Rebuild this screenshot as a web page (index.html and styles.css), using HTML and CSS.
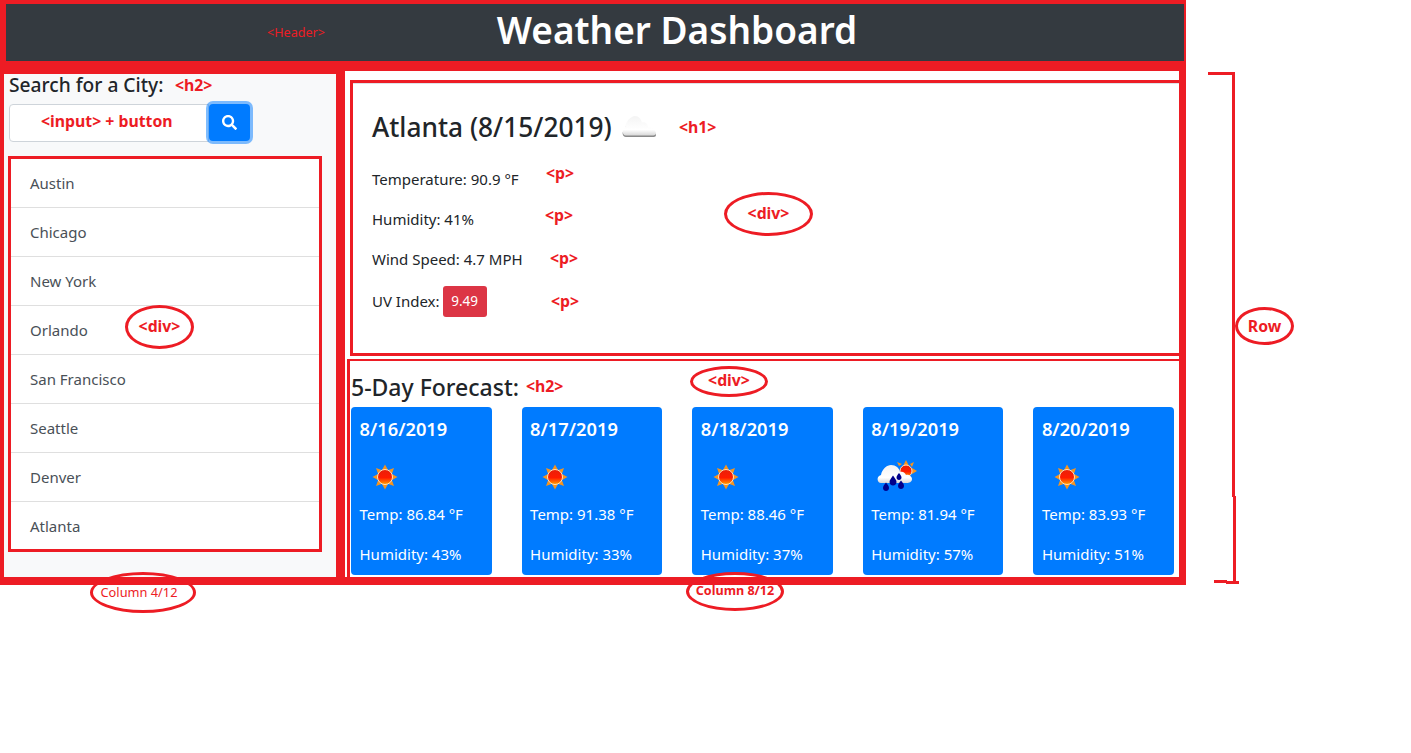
FILE: index.html
```html
<!DOCTYPE html>
<html lang="en">
<head>
    <meta charset="UTF-8">
    <title>Weather Dashboard</title>
    <link rel="stylesheet" href="styles.css">
</head>
<body>
    <svg class="defs" width="0" height="0">
        <defs>
            <linearGradient id="sunFill" x1="0" y1="0" x2="0" y2="1">
                <stop offset="0" stop-color="#e8200a"/>
                <stop offset="0.55" stop-color="#ff1c00"/>
                <stop offset="1" stop-color="#ffa200"/>
            </linearGradient>
            <linearGradient id="cloudFill" x1="0" y1="0" x2="0" y2="1">
                <stop offset="0" stop-color="#f4f4f4"/>
                <stop offset="0.7" stop-color="#ffffff"/>
                <stop offset="1" stop-color="#d8d8d8"/>
            </linearGradient>
            <symbol id="sun" viewBox="0 0 50 50">
                <g fill="#f7941d">
                    <polygon points="21.500,19 25,12.500 28.500,19"/>
                    <polygon points="21.500,31 25,37.500 28.500,31"/>
                    <polygon points="19,21.500 12.500,25 19,28.500"/>
                    <polygon points="31,21.500 37.500,25 31,28.500"/>
                    <polygon points="18,21.500 16,16 21.500,18"/>
                    <polygon points="32,21.500 34,16 28.500,18"/>
                    <polygon points="18,28.500 16,34 21.500,32"/>
                    <polygon points="32,28.500 34,34 28.500,32"/>
                </g>
                <circle cx="25" cy="25" r="7.500" fill="url(#sunFill)" stroke="#ffe3c0" stroke-width="1"/>
            </symbol>
            <symbol id="cloud" viewBox="0 0 50 50">
                <path d="M12 35C8 35 7.500 29 11 27.500C12 21 17 17 21 17C25 17 27 20 28 23C31 22 34 24 34 27C38 27 42 31 42 33C42 35 40 35 38 35Z" fill="#8a8a8a"/>
                <path d="M12 33.500C8 33.500 7.500 27 11 25.500C12 19 17 14 21 14C25 14 27 17 28 20.500C31 19.500 34 22 34 25C38 25 42 29 42 31C42 33 40 33.500 38 33.500Z" fill="url(#cloudFill)"/>
            </symbol>
            <symbol id="rain" viewBox="0 0 50 50">
                <g fill="#f7941d">
                    <polygon points="32,14 35,8 38,14"/>
                    <polygon points="41,16 46,19 41,22"/>
                    <polygon points="28,14 26,10 31,12"/>
                    <polygon points="39,12 43,10 41,15"/>
                </g>
                <circle cx="35" cy="19" r="6" fill="url(#sunFill)" stroke="#ffe3c0" stroke-width="1"/>
                <path d="M10 31C6 31 5 24 10 23C11 17 16 13 20 13C25 13 28 16 29 20C32 19 34 21 35 23C38 22 41 25 41 27C41 30 38 31 36 31Z" fill="url(#cloudFill)"/>
                <g fill="#00008b">
                    <path d="M15 30.500C17 33 18 34 18 36C18 38 16.500 39 15 39C13.500 39 12 38 12 36C12 34 13 33 15 30.500Z"/>
                    <path d="M22 23.500C24 26.500 25.500 28 25.500 30C25.500 32 24 33.500 22 33.500C20 33.500 18.500 32 18.500 30C18.500 28 20 26.500 22 23.500Z"/>
                    <path d="M28 21C29.500 23 30.500 24 30.500 25.500C30.500 27 29.500 28 28 28C26.500 28 25.500 27 25.500 25.500C25.500 24 26.500 23 28 21Z"/>
                    <path d="M30 28.500C32 31 33 32 33 34C33 36 31.500 37 30 37C28.500 37 27 36 27 34C27 32 28 31 30 28.500Z"/>
                </g>
            </symbol>
        </defs>
    </svg>

    <div class="page">
        <div class="shot">
            <header class="top">
                <h1 class="top-title">Weather Dashboard</h1>
            </header>

            <div class="columns">
                <aside class="side">
                    <h2 class="side-title">Search for a City:</h2>
                    <div class="search">
                        <input class="search-input" type="text">
                        <button class="search-btn" type="button">
                            <svg class="search-icon" viewBox="0 0 512 512"><path fill="#fff" d="M505 442.7L405.3 343c-4.500-4.500-10.600-7-17-7H372c27.600-35.300 44-79.700 44-128C416 93.100 322.900 0 208 0S0 93.100 0 208s93.100 208 208 208c48.300 0 92.700-16.400 128-44v16.300c0 6.400 2.500 12.500 7 17l99.700 99.700c9.400 9.400 24.600 9.400 33.900 0l28.300-28.300c9.400-9.400 9.400-24.600.1-34zM208 336c-70.700 0-128-57.200-128-128 0-70.700 57.200-128 128-128 70.700 0 128 57.200 128 128 0 70.700-57.200 128-128 128z"/></svg>
                        </button>
                    </div>
                    <ul class="cities">
                        <li>Austin</li>
                        <li>Chicago</li>
                        <li>New York</li>
                        <li>Orlando</li>
                        <li>San Francisco</li>
                        <li>Seattle</li>
                        <li>Denver</li>
                        <li>Atlanta</li>
                    </ul>
                </aside>

                <main class="main">
                    <section class="today">
                        <h1 class="today-title">Atlanta (8/15/2019) <svg class="today-icon"><use href="#cloud"/></svg></h1>
                        <p>Temperature: 90.9 °F</p>
                        <p>Humidity: 41%</p>
                        <p>Wind Speed: 4.7 MPH</p>
                        <p class="uv">UV Index: <span class="uv-badge">9.49</span></p>
                    </section>

                    <section class="forecast">
                        <h2 class="forecast-title">5-Day Forecast:</h2>
                        <div class="cards">
                            <div class="card">
                                <h3>8/16/2019</h3>
                                <svg class="card-icon"><use href="#sun"/></svg>
                                <p>Temp: 86.84 °F</p>
                                <p>Humidity: 43%</p>
                            </div>
                            <div class="card">
                                <h3>8/17/2019</h3>
                                <svg class="card-icon"><use href="#sun"/></svg>
                                <p>Temp: 91.38 °F</p>
                                <p>Humidity: 33%</p>
                            </div>
                            <div class="card">
                                <h3>8/18/2019</h3>
                                <svg class="card-icon"><use href="#sun"/></svg>
                                <p>Temp: 88.46 °F</p>
                                <p>Humidity: 37%</p>
                            </div>
                            <div class="card">
                                <h3>8/19/2019</h3>
                                <svg class="card-icon"><use href="#rain"/></svg>
                                <p>Temp: 81.94 °F</p>
                                <p>Humidity: 57%</p>
                            </div>
                            <div class="card">
                                <h3>8/20/2019</h3>
                                <svg class="card-icon"><use href="#sun"/></svg>
                                <p>Temp: 83.93 °F</p>
                                <p>Humidity: 51%</p>
                            </div>
                        </div>
                    </section>
                </main>
            </div>
        </div>

        <!-- red notes drawn over the screenshot -->
        <span class="note note-header">&lt;Header&gt;</span>
        <span class="note note-bold note-side-h2">&lt;h2&gt;</span>
        <span class="note note-bold note-input">&lt;input&gt; + button</span>
        <span class="note note-bold note-h1">&lt;h1&gt;</span>
        <span class="note note-bold note-p1">&lt;p&gt;</span>
        <span class="note note-bold note-p2">&lt;p&gt;</span>
        <span class="note note-bold note-p3">&lt;p&gt;</span>
        <span class="note note-bold note-p4">&lt;p&gt;</span>
        <span class="note note-bold note-forecast-h2">&lt;h2&gt;</span>

        <span class="ring note-bold ring-today">&lt;div&gt;</span>
        <span class="ring note-bold ring-cities">&lt;div&gt;</span>
        <span class="ring note-bold ring-forecast">&lt;div&gt;</span>
        <span class="ring note-bold ring-row">Row</span>
        <span class="ring ring-col4">Column 4/12</span>
        <span class="ring note-bold ring-col8">Column 8/12</span>

        <svg class="bracket" viewBox="0 0 40 520">
            <g fill="#ed1c24">
                <rect x="3" y="0" width="27" height="3"/>
                <rect x="27" y="0" width="3" height="425"/>
                <rect x="28" y="424" width="3" height="86"/>
                <rect x="9" y="508" width="13" height="3"/>
                <rect x="21" y="509" width="13" height="3"/>
            </g>
        </svg>
    </div>
</body>
</html>
```

FILE: styles.css
```css
* {
    box-sizing: border-box;
}
body {
    margin: 0;
    background-color: #fff;
    font-family: "Noto Sans", "Open Sans", sans-serif;
    font-size: 15px;
    line-height: 24px;
    color: #212529;
}
h1, h2, h3, p, ul {
    margin: 0;
    padding: 0;
}
.defs {
    position: absolute;
}
.page {
    position: relative;
    height: 753px;
    overflow: hidden;
}
.shot {
    width: 1186px;
    height: 585px;
    background-color: #ed1c24;
    padding-top: 4px;
}

/* header */
.top {
    height: 57px;
    margin: 0 2px 10px 6px;
    padding: 0 0 6px 164px;
    background-color: #343a40;
    display: flex;
    align-items: center;
    justify-content: center;
}
.top-title {
    font-size: 37px;
    line-height: 50px;
    font-weight: 600;
    color: #fff;
}

/* columns */
.columns {
    display: grid;
    grid-template-columns: 332px 834px;
    column-gap: 9px;
    height: 506px;
    padding-left: 4px;
}
.side {
    margin-top: 3px;
    padding-left: 4px;
    background-color: #f8f9fa;
}
.side-title {
    padding-left: 1px;
    font-size: 19.200px;
    line-height: 22px;
    font-weight: 500;
}
.search {
    display: flex;
    margin: 8px 0 14px 1px;
}
.search-input {
    width: 200px;
    height: 38px;
    border: 1px solid #ced4da;
    border-radius: 4px 0 0 4px;
    background-color: #fff;
}
.search-btn {
    width: 41px;
    height: 37px;
    border: none;
    border-radius: 4px;
    background-color: #007bff;
    box-shadow: 0 0 0 3px rgba(0, 123, 255, 0.5);
    display: flex;
    align-items: center;
    justify-content: center;
    padding: 0;
}
.search-icon {
    width: 15px;
    height: 15px;
}
.cities {
    width: 314px;
    height: 396px;
    border: 3px solid #ed1c24;
    background-color: #fff;
    list-style: none;
    overflow: hidden;
}
.cities li {
    height: 49px;
    padding: 12px 0 0 19px;
    border-bottom: 1px solid #dfdfdf;
    color: #495057;
}
.cities li:last-child {
    border-bottom: none;
}

/* right column */
.main {
    background-color: #fff;
    padding-top: 9px;
}
.today {
    height: 276px;
    margin-left: 5px;
    padding: 27px 0 0 19px;
    border: 3px solid #ed1c24;
    border-right: none;
    box-shadow: inset 0 1px 0 #dee2e6;
}
.today-title {
    display: flex;
    align-items: center;
    gap: 2px;
    height: 34px;
    margin-bottom: 23px;
    font-size: 26.300px;
    line-height: 34px;
    font-weight: 500;
}
.today-icon {
    width: 50px;
    height: 50px;
    flex-shrink: 0;
}
.today p {
    margin-bottom: 16px;
}
.today .uv {
    display: flex;
    align-items: center;
    gap: 3px;
    margin-top: -2px;
}
.uv-badge {
    width: 44px;
    height: 31px;
    margin-top: 1px;
    border-radius: 3px;
    background-color: #dc3545;
    color: #fff;
    font-size: 13.500px;
    line-height: 31px;
    text-align: center;
}
.forecast {
    height: 218px;
    margin-top: 3px;
    margin-left: 2px;
    padding: 12px 5px 0 1px;
    border-left: 3px solid #ed1c24;
    border-top: 2px solid #ed1c24;
}
.forecast-title {
    margin-bottom: 5px;
    font-size: 23px;
    line-height: 29px;
    font-weight: 500;
}
.cards {
    display: flex;
    gap: 30px;
}
.card {
    flex: 1;
    height: 168px;
    padding: 10px 0 0 8.500px;
    border-radius: 4px;
    background-color: #007bff;
    color: #fff;
}
.card h3 {
    font-size: 18.300px;
    line-height: 24px;
    font-weight: 600;
}
.card-icon {
    display: block;
    width: 50px;
    height: 50px;
    margin: 11px 0 0;
}
.card p {
    margin-bottom: 16px;
}

/* annotations */
.note, .ring {
    position: absolute;
    color: #ed1c24;
    line-height: 24px;
}
.note-bold {
    font-size: 15.800px;
    font-weight: 700;
}
.note-header {
    left: 267px;
    top: 21px;
    font-size: 12.600px;
}
.note-side-h2 {
    left: 175px;
    top: 73px;
}
.note-input {
    left: 41px;
    top: 109px;
}
.note-h1 {
    left: 679px;
    top: 115px;
}
.note-p1 {
    left: 546px;
    top: 161px;
}
.note-p2 {
    left: 545px;
    top: 203px;
}
.note-p3 {
    left: 550px;
    top: 246px;
}
.note-p4 {
    left: 551px;
    top: 289px;
}
.note-forecast-h2 {
    left: 526px;
    top: 374px;
}
.ring {
    display: flex;
    align-items: center;
    justify-content: center;
    border: 3px solid #ed1c24;
    border-radius: 50%;
    padding-bottom: 2px;
}
.ring-today {
    left: 724px;
    top: 192px;
    width: 89px;
    height: 44px;
}
.ring-cities {
    left: 125px;
    top: 305px;
    width: 69px;
    height: 44px;
}
.ring-forecast {
    left: 690px;
    top: 366px;
    width: 78px;
    height: 31px;
    padding-bottom: 3px;
}
.ring-row {
    left: 1235px;
    top: 307px;
    width: 59px;
    height: 38px;
    padding-bottom: 0;
}
.ring-col4 {
    left: 90px;
    top: 572px;
    width: 106px;
    height: 41px;
    padding-right: 8px;
    font-size: 12.800px;
    font-weight: 400;
}
.ring-col8 {
    left: 686px;
    top: 572px;
    width: 98px;
    height: 39px;
    font-size: 12.600px;
}
.bracket {
    position: absolute;
    left: 1205px;
    top: 72px;
    width: 40px;
    height: 520px;
}
```
